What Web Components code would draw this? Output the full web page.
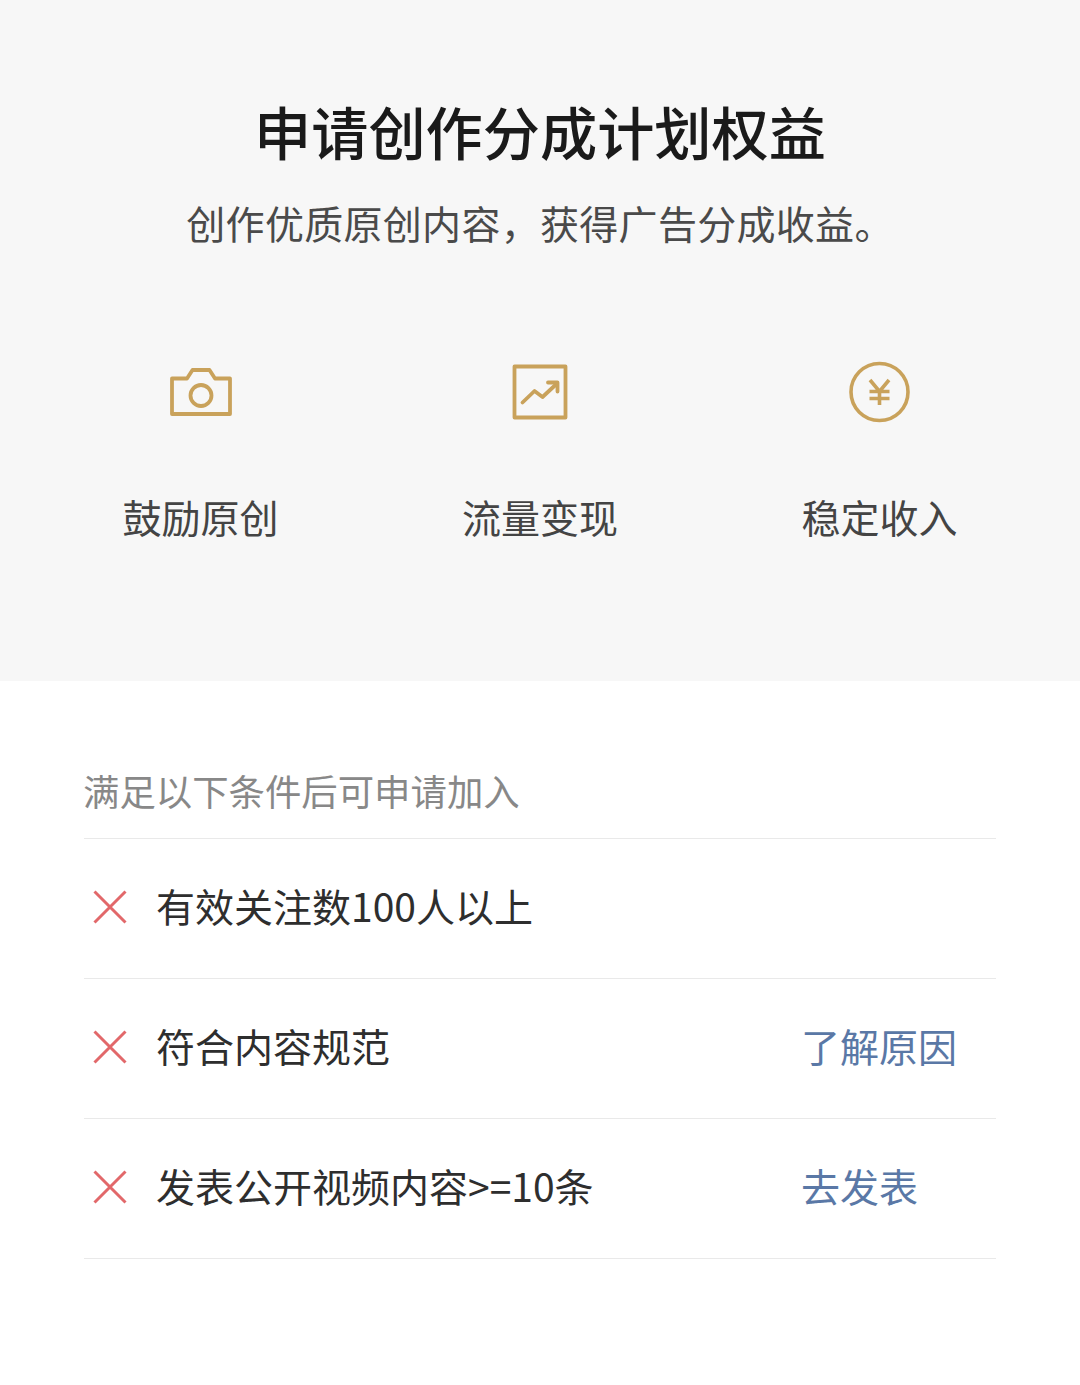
<!DOCTYPE html>
<html lang="zh">
<head>
<meta charset="utf-8">
<title>申请创作分成计划权益</title>
<style>
  html, body { margin: 0; background: #fff; }
  body { font-family: "Noto Sans CJK SC", "Noto Sans", sans-serif; }
</style>
</head>
<body>
<apply-page>
  <apply-hero slot="hero" heading="申请创作分成计划权益" sub="创作优质原创内容，获得广告分成收益。">
    <benefit-item label="鼓励原创" icon="camera"></benefit-item>
    <benefit-item label="流量变现" icon="trend"></benefit-item>
    <benefit-item label="稳定收入" icon="yen"></benefit-item>
  </apply-hero>
  <condition-list slot="list" heading="满足以下条件后可申请加入">
    <condition-row text="有效关注数100人以上"></condition-row>
    <condition-row text="符合内容规范" action="了解原因"></condition-row>
    <condition-row text="发表公开视频内容>=10条" action="去发表"></condition-row>
  </condition-list>
</apply-page>

<script>
const ICONS = {
  camera: `<svg width="64" height="54" viewBox="0 0 64 54" fill="none" stroke="#c9a25b" stroke-width="3.800" stroke-linejoin="round">
    <path d="M3 13.500 H18 L23.500 5 H40.500 L46 13.500 H61 V49 H3 Z"/>
    <circle cx="32" cy="30.500" r="10.500"/>
  </svg>`,
  trend: `<svg width="56" height="56" viewBox="0 0 56 56" fill="none" stroke="#c9a25b" stroke-width="3.800" stroke-linejoin="round" stroke-linecap="round">
    <rect x="2.500" y="2.500" width="51" height="51"/>
    <path d="M10.500 38.500 L22.500 27 L30.500 33 L45 19.500"/>
    <path d="M36 18.500 H45.500 V27.500"/>
  </svg>`,
  yen: `<svg width="62" height="62" viewBox="0 0 62 62" fill="none" stroke="#c9a25b" stroke-width="3.600">
    <circle cx="30.500" cy="31" r="28.500"/>
    <path d="M21 19 L30.500 30.500 L40 19 M20.500 30.500 H40.500 M20.500 37.500 H40.500 M30.500 30.500 V44"/>
  </svg>`
};

class ApplyPage extends HTMLElement {
  constructor() {
    super();
    this.attachShadow({ mode: 'open' }).innerHTML = `
      <style>
        :host { display: block; width: 1080px; height: 1385px; background: #fff; overflow: hidden; }
      </style>
      <slot name="hero"></slot>
      <slot name="list"></slot>
    `;
  }
}

class ApplyHero extends HTMLElement {
  constructor() {
    super();
    this.attachShadow({ mode: 'open' });
  }

  connectedCallback() {
    this.shadowRoot.innerHTML = `
      <style>
        :host { display: block; height: 681px; box-sizing: border-box; padding-top: 88px; background: #f7f7f7; text-align: center; }
        h1 { margin: 0; font-size: 57.200px; line-height: 84px; font-weight: 500; color: #1a1a1a; }
        p { margin: 22px 0 0; font-size: 39px; letter-spacing: 0.300px; line-height: 56px; font-weight: 400; color: #4a4a4a; }
        .grid { display: grid; grid-template-columns: repeat(3, 339.500px); justify-content: center; margin-top: 111px; }
      </style>
      <h1>${this.getAttribute('heading')}</h1>
      <p>${this.getAttribute('sub')}</p>
      <div class="grid"><slot></slot></div>
    `;
  }
}

class BenefitItem extends HTMLElement {
  constructor() {
    super();
    this.attachShadow({ mode: 'open' });
  }

  connectedCallback() {
    this.shadowRoot.innerHTML = `
      <style>
        :host { display: flex; flex-direction: column; align-items: center; }
        .icon { height: 62px; display: flex; align-items: center; justify-content: center; }
        .label { margin-top: 65px; font-size: 39px; line-height: 56px; color: #444; }
        svg { display: block; }
      </style>
      <div class="icon">${ICONS[this.getAttribute('icon')]}</div>
      <div class="label">${this.getAttribute('label')}</div>
    `;
  }
}

class ConditionList extends HTMLElement {
  constructor() {
    super();
    this.attachShadow({ mode: 'open' });
  }

  connectedCallback() {
    this.shadowRoot.innerHTML = `
      <style>
        :host { display: block; padding: 0 84px; }
        .head { box-sizing: border-box; height: 158px; padding-top: 81px; font-size: 36.400px; line-height: 56px; color: #888; border-bottom: 1px solid #e9e9e9; text-indent: -1px; }
      </style>
      <div class="head">${this.getAttribute('heading')}</div>
      <slot></slot>
    `;
  }
}

class ConditionRow extends HTMLElement {
  constructor() {
    super();
    this.attachShadow({ mode: 'open' });
  }

  connectedCallback() {
    const action = this.getAttribute('action');
    this.shadowRoot.innerHTML = `
      <style>
        :host { display: grid; grid-template-columns: 73px 646px 1fr; align-items: center; height: 140px; box-sizing: border-box; border-bottom: 1px solid #e9e9e9; font-size: 39px; }
        svg { display: block; margin-left: 9px; margin-top: -3px; }
        .text { color: #2e2e2e; line-height: 56px; margin: -7px 0 0 -1px; }
        .action { color: #5a78a6; line-height: 56px; margin: -7px 0 0 -2px; }
      </style>
      <svg width="34" height="34" viewBox="0 0 34 34" fill="none" stroke="#e2686a" stroke-width="3">
        <path d="M1.500 1.500 L32.500 32.500 M32.500 1.500 L1.500 32.500"/>
      </svg>
      <div class="text"></div>
      <div class="action">${action || ''}</div>
    `;
    this.shadowRoot.querySelector('.text').textContent = this.getAttribute('text');
  }
}

customElements.define('apply-page', ApplyPage);
customElements.define('apply-hero', ApplyHero);
customElements.define('benefit-item', BenefitItem);
customElements.define('condition-list', ConditionList);
customElements.define('condition-row', ConditionRow);
</script>
</body>
</html>
